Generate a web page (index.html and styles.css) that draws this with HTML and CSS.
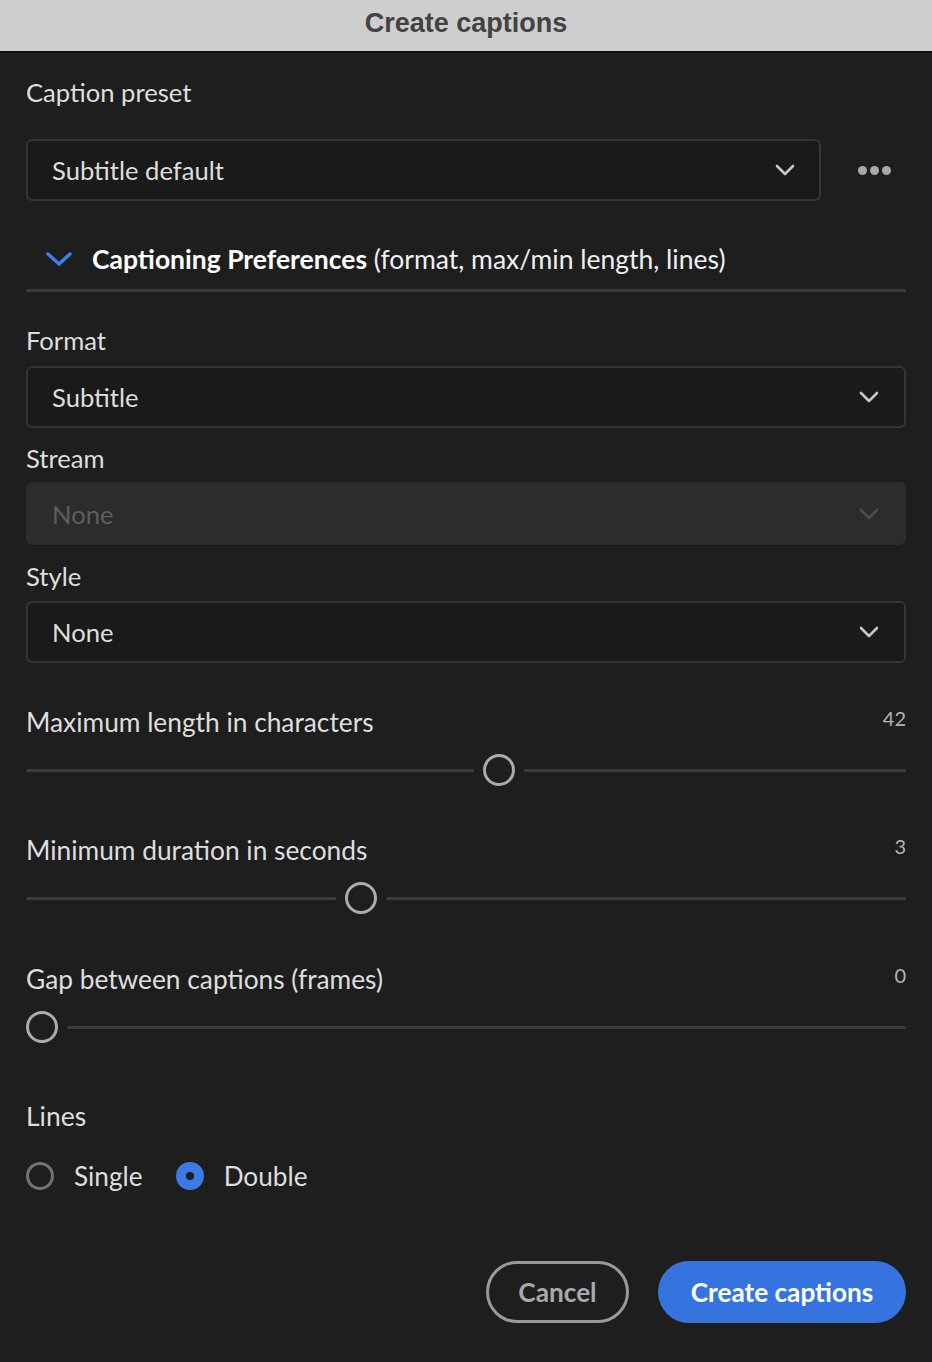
FILE: index.html
```html
<!DOCTYPE html>
<html lang="en">
<head>
<meta charset="utf-8">
<title>Create captions</title>
<link rel="stylesheet" href="styles.css">
</head>
<body>
<div class="dialog">
  <header class="titlebar">Create captions</header>
  <main class="content">
    <div class="label first">Caption preset</div>
    <div class="preset-row">
      <div class="select preset">
        <span class="select-text">Subtitle default</span>
        <svg class="chev" viewBox="0 0 20 12" width="20" height="12"><polyline points="2,2 10,10 18,2" fill="none" stroke="#c6c6c6" stroke-width="2.6" stroke-linecap="round" stroke-linejoin="round"/></svg>
      </div>
      <div class="more"><span class="dot"></span><span class="dot"></span><span class="dot"></span></div>
    </div>

    <div class="prefs">
      <svg class="prefs-chev" viewBox="0 0 26 14" width="26" height="14"><polyline points="2,2 13,12 24,2" fill="none" stroke="#3d82ec" stroke-width="3.4" stroke-linecap="round" stroke-linejoin="round"/></svg>
      <span class="prefs-title">Captioning Preferences</span><span class="prefs-sub">&nbsp;(format, max/min length, lines)</span>
    </div>
    <div class="divider"></div>

    <div class="label format-label">Format</div>
    <div class="select">
      <span class="select-text">Subtitle</span>
      <svg class="chev" viewBox="0 0 20 12" width="20" height="12"><polyline points="2,2 10,10 18,2" fill="none" stroke="#c6c6c6" stroke-width="2.6" stroke-linecap="round" stroke-linejoin="round"/></svg>
    </div>

    <div class="label small-gap">Stream</div>
    <div class="select disabled">
      <span class="select-text">None</span>
      <svg class="chev" viewBox="0 0 20 12" width="20" height="12"><polyline points="2,2 10,10 18,2" fill="none" stroke="#4e4e4e" stroke-width="2.6" stroke-linecap="round" stroke-linejoin="round"/></svg>
    </div>

    <div class="label small-gap style-label">Style</div>
    <div class="select">
      <span class="select-text">None</span>
      <svg class="chev" viewBox="0 0 20 12" width="20" height="12"><polyline points="2,2 10,10 18,2" fill="none" stroke="#c6c6c6" stroke-width="2.6" stroke-linecap="round" stroke-linejoin="round"/></svg>
    </div>

    <div class="slider-block s1">
      <div class="slider-head"><span class="label-text">Maximum length in characters</span><span class="value">42</span></div>
      <div class="slider">
        <div class="track" style="width:448px"></div>
        <div class="thumb"></div>
        <div class="track rest"></div>
      </div>
    </div>

    <div class="slider-block">
      <div class="slider-head"><span class="label-text">Minimum duration in seconds</span><span class="value">3</span></div>
      <div class="slider">
        <div class="track" style="width:310px"></div>
        <div class="thumb"></div>
        <div class="track rest"></div>
      </div>
    </div>

    <div class="slider-block s3">
      <div class="slider-head"><span class="label-text">Gap between captions (frames)</span><span class="value">0</span></div>
      <div class="slider">
        <div class="thumb"></div>
        <div class="track rest"></div>
      </div>
    </div>

    <div class="label lines-label">Lines</div>
    <div class="radios">
      <label class="radio"><span class="radio-dot"></span><span>Single</span></label>
      <label class="radio checked"><span class="radio-dot"></span><span>Double</span></label>
    </div>

    <div class="actions">
      <button class="btn cancel">Cancel</button>
      <button class="btn primary">Create captions</button>
    </div>
  </main>
</div>
</body>
</html>
```
FILE: styles.css
```css
* { box-sizing: border-box; }
html, body { margin: 0; padding: 0; }
body {
  width: 932px;
  height: 1362px;
  background: #1e1e1e;
  font-family: "Lato", "Open Sans", sans-serif;
  color: #dedede;
  overflow: hidden;
}
.dialog { width: 932px; height: 1362px; display: flex; flex-direction: column; }
.titlebar {
  height: 53px;
  background: #cecece;
  border-bottom: 2px solid #0f0f0f;
  color: #424242;
  font-family: "Liberation Sans", "Roboto", sans-serif;
  font-weight: 700;
  font-size: 27px;
  display: flex;
  align-items: center;
  justify-content: center;
  padding-bottom: 5px;
}
.content { padding: 0 26px; display: flex; flex-direction: column; }
.label { font-size: 25.6px; line-height: 32px; height: 32px; }
.label.first { margin-top: 23px; }
.preset-row { display: flex; align-items: center; margin-top: 31px; }
.select {
  height: 62px;
  border: 2px solid #353535;
  border-radius: 6px;
  background: #1a1a1a;
  display: flex;
  align-items: center;
  justify-content: space-between;
  padding: 0 25px 0 24px;
  font-size: 25.6px;
  color: #dedede;
}
.select.preset { flex: 1; padding-right: 24px; }
.select.disabled { background: #2c2c2c; border-color: #2c2c2c; color: #5d5d5d; height: 63px; }
.more { width: 85px; display: flex; justify-content: flex-end; gap: 3px; padding-right: 15px; }
.dot { width: 9px; height: 9px; border-radius: 50%; background: #a9a9a9; }
.prefs { display: flex; align-items: center; height: 40px; margin-top: 38px; font-size: 26.5px; }
.prefs-chev { margin-left: 20px; margin-right: 20px; }
.prefs-title { font-weight: 700; color: #ffffff; }
.prefs-sub { color: #f0f0f0; }
.divider { height: 3px; background: #3a3a3a; border-radius: 2px; margin-top: 10px; }
.format-label { margin-top: 32px; margin-bottom: 10px; }
.small-gap { margin-top: 14px; margin-bottom: 8px; }
.style-label { margin-top: 15px; margin-bottom: 9px; }
.slider-block { margin-top: 48px; }
.slider-block.s1 { margin-top: 43px; }
.slider-block.s3 { margin-top: 49px; }
.slider-head { display: flex; justify-content: space-between; align-items: flex-start; height: 32px; }
.label-text { font-size: 26.3px; line-height: 32px; }
.value { font-size: 20px; line-height: 24px; color: #b4b4b4; }
.slider { display: flex; align-items: center; height: 32px; margin-top: 16px; gap: 9px; }
.track { height: 3px; background: #3c3c3c; border-radius: 2px; }
.track.rest { flex: 1; }
.thumb { width: 32px; height: 32px; border-radius: 50%; border: 3px solid #ababab; flex: none; }
.lines-label { margin-top: 57px; font-size: 26.5px; }
.radios { display: flex; align-items: center; gap: 33px; margin-top: 28px; height: 32px; font-size: 26.2px; }
.radio { display: flex; align-items: center; gap: 20px; }
.radio-dot { width: 28px; height: 28px; border-radius: 50%; border: 3px solid #737373; }
.radio.checked .radio-dot { border: 10px solid #3b7be3; background: #1e1e1e; }
.actions { display: flex; justify-content: flex-end; gap: 29px; margin-top: 69px; }
.btn {
  height: 62px;
  border-radius: 31px;
  font-family: "Lato", "Open Sans", sans-serif;
  font-weight: 700;
  font-size: 26.2px;
  padding: 0;
}
.btn.cancel { width: 143px; background: transparent; border: 3px solid #999999; color: #a9a9a9; }
.btn.primary { width: 248px; background: #3574de; border: none; color: #ffffff; }
```
